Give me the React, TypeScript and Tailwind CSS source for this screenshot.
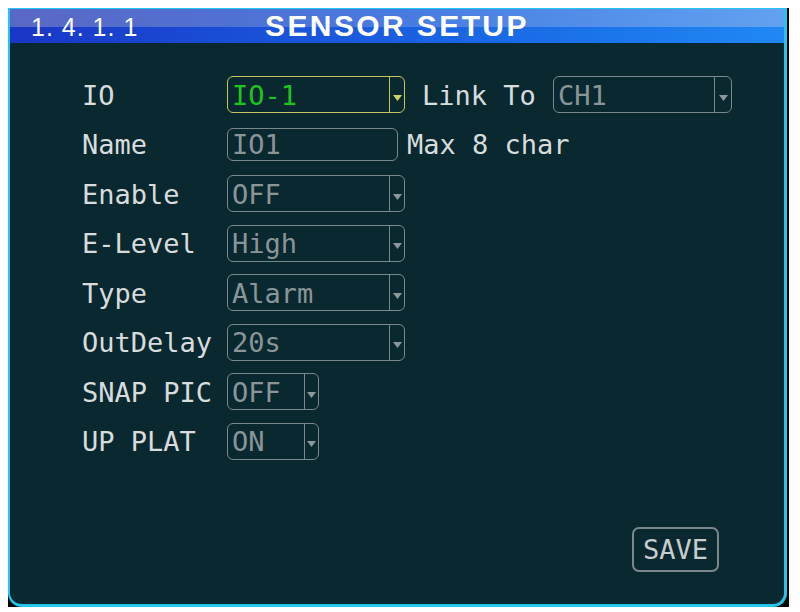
import React from 'react';
import clsx from 'clsx';

const mono = "font-['DejaVu_Sans_Mono',monospace] text-[27px] leading-none";

const Arrow = ({ focused }: { focused?: boolean }) => (
  <svg width="9" height="6" viewBox="0 0 9 6">
    <path d="M0 0H9L4.5 6Z" fill={focused ? '#d2d25e' : '#8b979a'} />
  </svg>
);

interface SelectProps {
  value: string;
  width: string;
  arrowWidth?: string;
  focused?: boolean;
}

const Select: React.FC<SelectProps> = ({ value, width, arrowWidth = 'w-[15px]', focused }: SelectProps) => (
  <div
    className={clsx(
      'flex h-[37px] rounded-[6px] border-[1.5px]',
      focused ? 'border-[#c6c65a]' : 'border-[#7b888b]',
      width
    )}
  >
    <div className={clsx('flex flex-1 items-center pl-[4px] pt-[1px]', mono, focused ? 'text-[#1ec41e]' : 'text-[#8a9598]')}>
      {value}
    </div>
    <div
      className={clsx(
        'flex items-center justify-center border-l-[1.5px] pt-[6px]',
        focused ? 'border-[#c6c65a]' : 'border-[#7b888b]',
        arrowWidth
      )}
    >
      <Arrow focused={focused} />
    </div>
  </div>
);

const Label = ({ children }: { children: React.ReactNode }) => (
  <div className={clsx('w-[145px] shrink-0 pt-[1px] text-[#d8dcdd]', mono)}>{children}</div>
);

export default function App() {
  const rows = [
    { label: 'Enable', value: 'OFF' },
    { label: 'E-Level', value: 'High' },
    { label: 'Type', value: 'Alarm' },
    { label: 'OutDelay', value: '20s' },
  ];

  return (
    <div className="h-[612px] w-[800px] bg-white pl-[8px] pt-[8px]">
      <div className="h-[599px] w-[781px] bg-black">
        <div className="flex h-full w-[779px] flex-col overflow-hidden rounded-b-[14px] border-b-[3px] border-l-[2px] border-r-[3px] border-t-[1px] border-[#24c6ee] bg-[#0a2830]">
          {/* title bar */}
          <div className="relative flex h-[34px] shrink-0 items-center bg-gradient-to-r from-[#1a36c6] via-[#1a5ee2] to-[#2088f2]">
            <div className="absolute inset-x-0 top-0 h-[18px] bg-gradient-to-r from-[#6a74c4]/80 via-[#5a86e0]/70 to-[#70a8f0]/80" />
            <div className="relative w-[255px] pl-[21px] pt-[2px] font-['Liberation_Sans',Arial,sans-serif] text-[25px] leading-none tracking-[1px] text-white">
              1. 4. 1. 1
            </div>
            <div className="relative font-['Liberation_Sans',Arial,sans-serif] text-[30px] font-bold leading-none tracking-[2.4px] text-white">
              SENSOR SETUP
            </div>
          </div>

          {/* form */}
          <div className="flex flex-1 flex-col pl-[72px] pt-[33px]">
            <div className="flex flex-col gap-[12.5px]">
              <div className="flex h-[37px] items-center">
                <Label>IO</Label>
                <Select value="IO-1" width="w-[178px]" focused />
                <div className={clsx('ml-[17px] w-[131px] pt-[1px] text-[#d8dcdd]', mono)}>Link To</div>
                <Select value="CH1" width="w-[179px]" arrowWidth="w-[17px]" />
              </div>
              <div className="flex h-[37px] items-center">
                <Label>Name</Label>
                <div className={clsx('flex h-[33px] w-[171px] items-center rounded-[6px] border-[1.5px] border-[#7b888b] pl-[4px] pt-[1px] text-[#8a9598]', mono)}>
                  IO1
                </div>
                <div className={clsx('ml-[9px] pt-[1px] text-[#d8dcdd]', mono)}>Max 8 char</div>
              </div>
              {rows.map((row) => (
                <div key={row.label} className="flex h-[37px] items-center">
                  <Label>{row.label}</Label>
                  <Select value={row.value} width="w-[178px]" />
                </div>
              ))}
              <div className="flex h-[37px] items-center">
                <Label>SNAP PIC</Label>
                <Select value="OFF" width="w-[92px]" arrowWidth="w-[14px]" />
              </div>
              <div className="flex h-[37px] items-center">
                <Label>UP PLAT</Label>
                <Select value="ON" width="w-[92px]" arrowWidth="w-[14px]" />
              </div>
            </div>

            <div className="mt-auto flex justify-end pb-[32px] pr-[65px]">
              <div className={clsx('flex h-[45px] w-[87px] items-center justify-center rounded-[7px] border-2 border-[#7b888b] text-[#c8cdce]', mono)}>
                SAVE
              </div>
            </div>
          </div>
        </div>
      </div>
    </div>
  );
}
